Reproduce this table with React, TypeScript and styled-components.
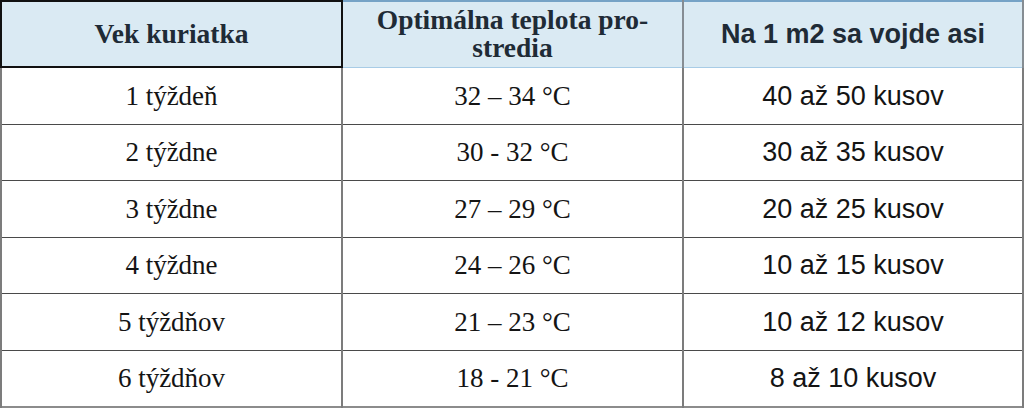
import styled, { createGlobalStyle } from 'styled-components';

const GlobalStyle = createGlobalStyle`
  html, body {
    margin: 0;
    padding: 0;
    background: #ffffff;
  }
`;

const SERIF = `'Liberation Serif', 'Times New Roman', serif`;
const SANS = `'Liberation Sans', Arial, sans-serif`;

type Face = 'serif' | 'sans';

const Table = styled.table`
  width: 1022px;
  border-collapse: collapse;
  table-layout: fixed;
  border-left: 2px solid #3f5a70;
  border-right: 2px solid #555a5e;
  border-bottom: 2px solid #8c8c8c;
`;

const HeadCell = styled.th<{ $face: Face; $selected?: boolean }>`
  height: 64px;
  padding: 0 10px;
  background: #daeaf3;
  color: #1f2b36;
  font-family: ${p => (p.$face === 'serif' ? SERIF : SANS)};
  font-size: ${p => (p.$face === 'serif' ? '27.5px' : '27px')};
  font-weight: 700;
  line-height: 28px;
  text-align: center;
  vertical-align: middle;
  border-top: 2px solid ${p => (p.$selected ? '#111' : '#76a3c6')};
  border-bottom: ${p => (p.$selected ? '2px solid #111' : '1px solid #a8cce6')};
  border-left: 2px solid ${p => (p.$selected ? '#111' : '#868d93')};
  border-right: 2px solid ${p => (p.$selected ? '#111' : '#868d93')};
`;

const Cell = styled.td<{ $face: Face }>`
  height: 55.5px;
  padding: 0 10px;
  color: #141414;
  font-family: ${p => (p.$face === 'serif' ? SERIF : SANS)};
  font-size: 27px;
  line-height: 30px;
  text-align: center;
  vertical-align: middle;
  border-top: 1px solid #4a4a4a;
  border-left: 2px solid #7c7c7c;
  border-right: 2px solid #7c7c7c;
`;

const rows: [string, string, string][] = [
  ['1 týždeň', '32 – 34 °C', '40 až 50 kusov'],
  ['2 týždne', '30 - 32 °C', '30 až 35 kusov'],
  ['3 týždne', '27 – 29 °C', '20 až 25 kusov'],
  ['4 týždne', '24 – 26 °C', '10 až 15 kusov'],
  ['5 týždňov', '21 – 23 °C', '10 až 12 kusov'],
  ['6 týždňov', '18 - 21 °C', '8 až 10 kusov'],
];

export default function App() {
  return (
    <>
      <GlobalStyle />
      <Table>
        <colgroup>
          <col style={{ width: 341 }} />
          <col style={{ width: 341 }} />
          <col style={{ width: 340 }} />
        </colgroup>
        <thead>
          <tr>
            <HeadCell $face="serif" $selected>Vek kuriatka</HeadCell>
            <HeadCell $face="serif">
              Optimálna teplota pro-
              <br />
              stredia
            </HeadCell>
            <HeadCell $face="sans">Na 1 m2 sa vojde asi</HeadCell>
          </tr>
        </thead>
        <tbody>
          {rows.map(([age, temp, count]) => (
            <tr key={age}>
              <Cell $face="serif">{age}</Cell>
              <Cell $face="serif">{temp}</Cell>
              <Cell $face="sans">{count}</Cell>
            </tr>
          ))}
        </tbody>
      </Table>
    </>
  );
}
